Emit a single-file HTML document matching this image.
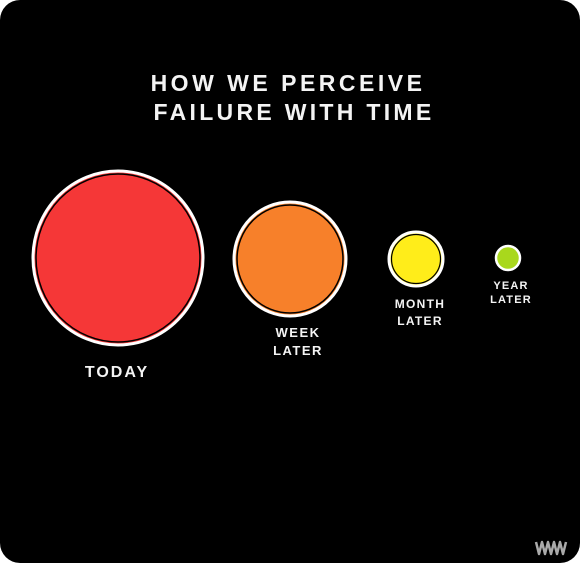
<!DOCTYPE html>
<html><head><style>
html,body{margin:0;padding:0;background:#fff;}
.box{position:absolute;left:0;top:0;width:580px;height:563px;background:#000;border-radius:20px;overflow:hidden;}
svg{position:absolute;left:0;top:0;}
text{font-family:"Liberation Sans",sans-serif;fill:#f4f4f4;font-weight:bold;text-anchor:middle;}
</style></head><body>
<div class="box">
<svg width="580" height="563" viewBox="0 0 580 563">
<text x="288" y="91" font-size="23" letter-spacing="3.5">HOW WE PERCEIVE</text>
<text x="294" y="120" font-size="23" letter-spacing="3.3">FAILURE WITH TIME</text>
<ellipse cx="118" cy="258" rx="85" ry="87" fill="#f53737" stroke="#fff" stroke-width="3"/>
<ellipse cx="118" cy="258" rx="82" ry="84" fill="none" stroke="#000" stroke-width="1.5"/>
<ellipse cx="290" cy="259" rx="56" ry="57" fill="#f7802a" stroke="#fff" stroke-width="3"/>
<ellipse cx="290" cy="259" rx="53" ry="54" fill="none" stroke="#000" stroke-width="1.5"/>
<circle cx="416" cy="259" r="27" fill="#ffed1a" stroke="#fff" stroke-width="3"/>
<circle cx="416" cy="259" r="24.5" fill="none" stroke="#000" stroke-width="1.2"/>
<circle cx="508" cy="258" r="12" fill="#a9d81c" stroke="#fff" stroke-width="2.5"/>
<text x="117" y="377" font-size="16" letter-spacing="2">TODAY</text>
<text x="298" y="337" font-size="13" letter-spacing="1.5">WEEK</text>
<text x="298" y="355" font-size="13" letter-spacing="1.5">LATER</text>
<text x="420" y="308" font-size="12" letter-spacing="1.3">MONTH</text>
<text x="420" y="325" font-size="12" letter-spacing="1.3">LATER</text>
<text x="511" y="289" font-size="11" letter-spacing="1.2">YEAR</text>
<text x="511" y="303" font-size="11" letter-spacing="1.2">LATER</text>
<path d="M536 542 L539 554 L542 542 L545 554 L548 542 L551 554 L554 542 L557 554 L560 542 L563 554 L566 542" fill="none" stroke="#aaa" stroke-width="2.5" stroke-linejoin="round"/>
</svg>
</div>
</body></html>
